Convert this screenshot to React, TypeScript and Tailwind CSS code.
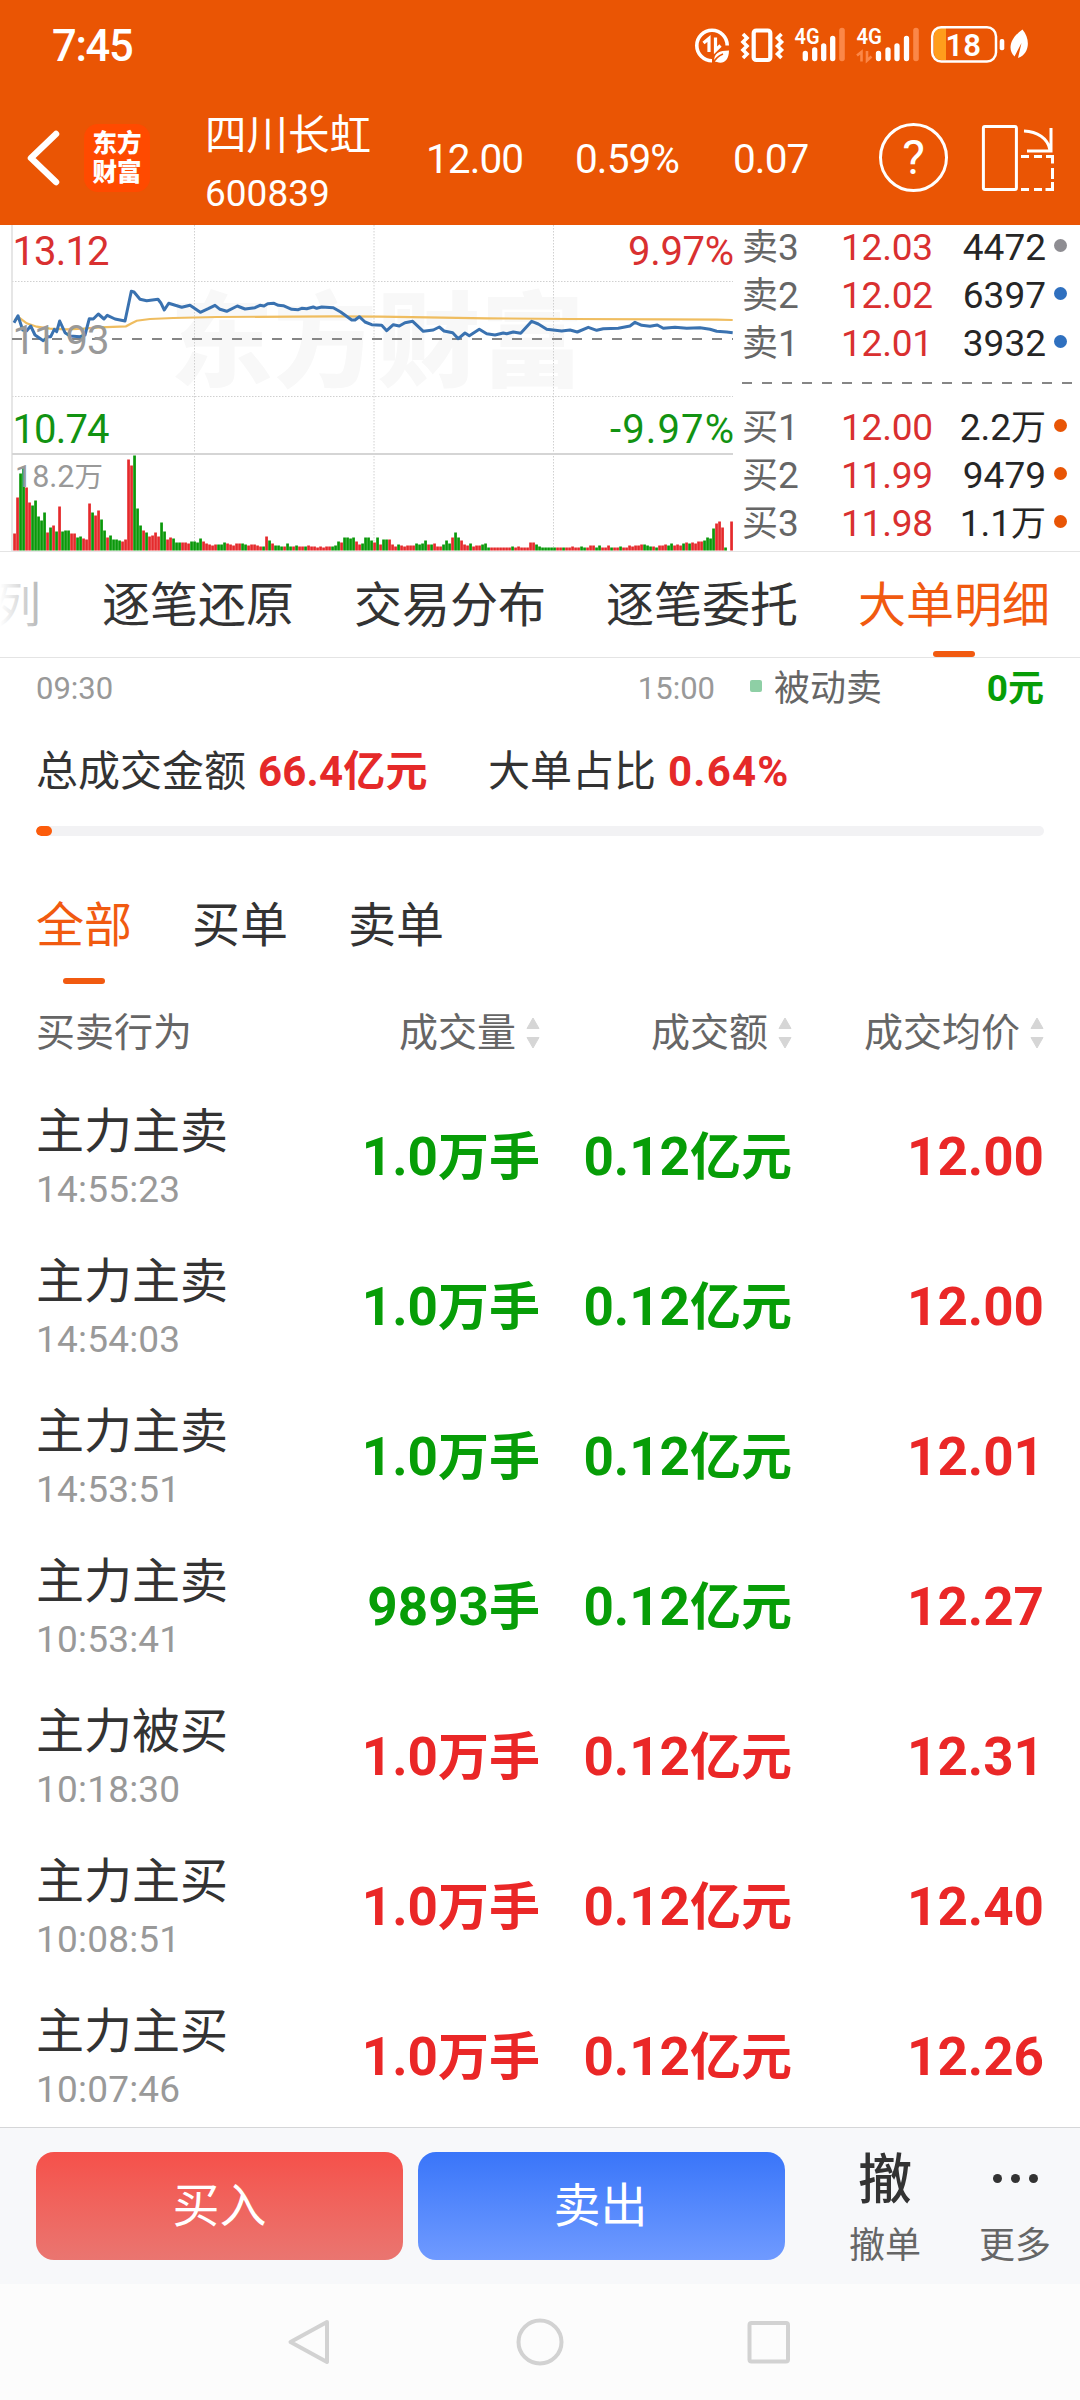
import clsx from 'clsx';
import type { ReactNode } from 'react';

type Side = 'buy' | 'sell';

interface Trade {
  label: string;
  time: string;
  volume: [string, string];
  amount: [string, string];
  price: string;
  side: Side;
}

interface Quote {
  label: string;
  level: string;
  price: string;
  volume: string;
  unit?: string;
  dot: string;
}

const TRADES: Trade[] = [
  { label: '主力主卖', time: '14:55:23', volume: ['1.0', '万手'], amount: ['0.12', '亿元'], price: '12.00', side: 'sell' },
  { label: '主力主卖', time: '14:54:03', volume: ['1.0', '万手'], amount: ['0.12', '亿元'], price: '12.00', side: 'sell' },
  { label: '主力主卖', time: '14:53:51', volume: ['1.0', '万手'], amount: ['0.12', '亿元'], price: '12.01', side: 'sell' },
  { label: '主力主卖', time: '10:53:41', volume: ['9893', '手'], amount: ['0.12', '亿元'], price: '12.27', side: 'sell' },
  { label: '主力被买', time: '10:18:30', volume: ['1.0', '万手'], amount: ['0.12', '亿元'], price: '12.31', side: 'buy' },
  { label: '主力主买', time: '10:08:51', volume: ['1.0', '万手'], amount: ['0.12', '亿元'], price: '12.40', side: 'buy' },
  { label: '主力主买', time: '10:07:46', volume: ['1.0', '万手'], amount: ['0.12', '亿元'], price: '12.26', side: 'buy' },
];

const ASKS: Quote[] = [
  { label: '卖', level: '3', price: '12.03', volume: '4472', dot: 'bg-[#8e8d92]' },
  { label: '卖', level: '2', price: '12.02', volume: '6397', dot: 'bg-[#2f70bf]' },
  { label: '卖', level: '1', price: '12.01', volume: '3932', dot: 'bg-[#2f70bf]' },
];

const BIDS: Quote[] = [
  { label: '买', level: '1', price: '12.00', volume: '2.2', unit: '万', dot: 'bg-[#e85505]' },
  { label: '买', level: '2', price: '11.99', volume: '9479', dot: 'bg-[#e85505]' },
  { label: '买', level: '3', price: '11.98', volume: '1.1', unit: '万', dot: 'bg-[#e85505]' },
];

const TABS = ['逐笔还原', '交易分布', '逐笔委托', '大单明细'];

// One entry per minute: colour of the bar and its height.
const VOLUME =
  'r17 r53 g77 g83 r63 r48 g45 g50 g34 g30 g38 r18 g23 r25 g19 r44 g19 g20 g20 r17 r17 g13 g14 r12 r11 r47 g38 r35 r40 g31 ' +
  'g20 r13 g15 g11 g11 g10 r9 r11 r91 r85 g95 g42 g25 r20 g18 r14 r15 r18 r14 g28 g19 r11 r13 g12 g8 g8 r8 r8 r7 g9 ' +
  'g9 g8 g12 r9 r7 r6 r5 r6 g6 g6 g8 r7 r6 r5 r7 r7 g7 g6 r5 r6 r6 r5 r4 g4 r14 g10 r7 g5 g5 g4 ' +
  'r4 g7 g4 r4 g5 r4 r4 g4 r5 r4 r4 r3 r4 r3 r4 r4 g4 g5 g9 r8 g13 g13 g12 g13 r9 r6 g7 g13 g13 g10 ' +
  'r8 g13 r6 g11 g11 r11 r6 r4 g6 r5 r4 r5 r5 r5 g7 g6 g7 g10 r6 g6 r7 r4 r4 g6 g10 g7 r13 g18 g13 r10 ' +
  'r6 r5 g7 r4 r5 r5 g6 g7 g3 r3 r3 r3 r3 r3 r3 r3 g4 r3 r4 r3 r3 r3 r8 r8 g6 g4 g3 g3 g3 g3 ' +
  'g3 r3 r3 g3 r3 r3 r4 r3 r3 g4 g3 r3 r5 r5 g3 g5 r3 r3 r5 g3 r3 r3 g4 r3 r3 r5 r4 r5 r5 r6 ' +
  'g6 g5 g4 r4 g3 r5 r5 r6 g5 g7 r5 r6 r5 g7 r8 g7 r8 r7 r9 r9 g10 g13 g12 g22 r27 r29 r23 g3 r0 r29';

const PRICE_LINE =
  '14,322.7 18,315.7 22.7,330 26.7,330.7 30.7,326 35,335 43.3,340.7 48.3,336.7 50.7,336.7 54.3,329.3 56.7,331.7 59.7,321 65,332.7 70,336 80,336.7 85,335 89.3,318.7 93.3,319 98.3,314 104,319 107.3,315.3 115,319 125,321 127.7,308.3 131.3,291.3 134,292 140,299.3 146.7,300.7 158,299.3 160.7,302.7 164.3,310 168.7,303.3 181.7,307.3 190,305.3 200.3,312.3 208.3,308.7 215,305.3 220,309.3 226.7,311.3 237.3,306 245,309 255,307.7 260,305.3 264,306 267.7,303.7 274,303.3 278.3,305.3 283.3,305.7 291.7,309.3 298.3,309.7 301.7,308.3 306.7,308.7 313.3,307 316.7,308.3 321.7,307 333.3,307.7 340.7,312 351.7,320 355,320 359.3,316.7 365,322 371.7,324.7 381.7,325.3 386.7,330.7 393.3,324.7 399.3,326 405,322.7 412.7,321.3 423.3,331.3 433.3,330 439.3,327 444,331 452.7,332.7 458.3,338.7 465,333 469.3,335.7 479.3,329.3 486.7,333.7 495,335 503.3,333 506.7,333.7 513.3,332 520.7,333.3 531.7,321.3 538.3,324 546.7,329.3 561.7,331 570,330 577.3,332 588.3,327.3 596.7,330.3 603.3,328.7 618.3,328.3 630,326 635,322.3 641.7,325.3 650,326.3 657.3,325 663.3,328.3 675,327.3 686.7,328.3 700,327.7 710,329.3 716.7,331.3 726.7,332 732.7,332.7';

const AVERAGE_LINE =
  '14,320 20,318.3 26.7,323.3 36.7,326.7 50,328.7 66.7,329.3 83.3,328.7 100,327.3 126,326.3 131.7,323.3 136.7,320.7 150,319 173.3,318 216.7,317 333.3,316.3 380,316.6 427,317.3 487,318.3 570,319 663,319.3 717,319.7 732.7,320';

const SANS = "font-['Roboto','Noto_Sans_CJK_SC',sans-serif]";

const sideColor = (side: Side) => (side === 'buy' ? 'text-[#ea2727]' : 'text-[#079d07]');

function StatusIcons() {
  return (
    <svg width="350" height="50" viewBox="690 20 350 50" className="ml-auto mr-10" fill="none">
      {/* data saver */}
      <path d="M727.200 45.500a15.200 15.200 0 1 0-15.200 15.200" stroke="#fff" strokeWidth="3.600" />
      <path d="M703.500 43l5.500-4.500v13.500" stroke="#fff" strokeWidth="3.200" />
      <path d="M715.500 37.500v13l5-5" stroke="#fff" strokeWidth="3.200" />
      <path d="M714.500 61.500c-1.500-8 5-11 14.500-11 0 10-6 14-12 11.500" fill="#fff" />
      <path d="M713 63.500c2-4.500 5-7.500 10-9.500" stroke="#ea5504" strokeWidth="1.600" />
      {/* vibrate */}
      <rect x="753.700" y="30.500" width="16.600" height="29.500" rx="2.500" stroke="#fff" strokeWidth="4.200" />
      <path d="M743 34l4 4-4 4 4 4-4 4 4 4-4 4M781.500 34l-4 4 4 4-4 4 4 4-4 4 4 4" stroke="#fff" strokeWidth="3.600" />
      {/* signal 1 */}
      <text x="794.500" y="44.300" fill="#fff" fontSize="22.500" fontWeight="600" textLength="25" lengthAdjust="spacingAndGlyphs">4G</text>
      <path d="M805.300 53.500v5M814.700 50v8.500M823.700 46v12.500M832.700 38.500v20" stroke="#fff" strokeWidth="5.300" strokeLinecap="round" />
      <path d="M842 30.500v28" stroke="#fb8748" strokeWidth="5.600" strokeLinecap="round" />
      {/* signal 2 */}
      <text x="856.500" y="44.300" fill="#fff" fontSize="22.500" fontWeight="600" textLength="25.500" lengthAdjust="spacingAndGlyphs">4G</text>
      <path d="M857 55.500l4.500-3.500v9.500M867 51v9.500l4.500-4" stroke="#fb8748" strokeWidth="2.600" />
      <path d="M878.500 53.500v5M888 50v8.500M897 46v12.500M906.500 38.500v20" stroke="#fff" strokeWidth="5.300" strokeLinecap="round" />
      <path d="M916 30.500v28" stroke="#fb8748" strokeWidth="5.600" strokeLinecap="round" />
      {/* battery */}
      <path d="M946 28h-5a7 7 0 0 0-7 7v18a7 7 0 0 0 7 7h5z" fill="#ff9d1c" />
      <rect x="932.200" y="27.200" width="63.800" height="34.300" rx="9" stroke="#fff" strokeWidth="2.500" />
      <text x="945.500" y="55.500" fill="#fff" fontSize="31" fontWeight="600">18</text>
      <rect x="999.700" y="39" width="4.600" height="11.300" rx="2" fill="#fff" />
      <path d="M1022.500 29.500c8 9 7.500 24.500-4.500 28.500l3.500-15-7 13.500c-7-6.500-5-18 8-27z" fill="#fff" />
    </svg>
  );
}

function RotateIcon() {
  return (
    <svg width="76" height="70" viewBox="981 122 76 70" className="ml-[33px]" fill="none" stroke="#fff" strokeWidth="3">
      <rect x="983.400" y="125.500" width="33" height="63" rx="1.500" />
      <path d="M1024 130c13 .500 24 7 26 19M1051 127v23h-24" />
      <path d="M1021 155.500h8M1034 155.500h8M1046 155.500h6.500v7M1052.500 167v11M1052.500 181v7.500h-7M1042 188.500h-8M1029 188.500h-8" />
    </svg>
  );
}

function Header() {
  return (
    <header className="h-[225px] bg-[#ea5504] text-white">
      <div className="flex h-[90px] items-center">
        <span className="ml-[52px] pt-[4px] text-[43.500px] font-medium leading-[60px] tracking-[-1.300px]">7:45</span>
        <StatusIcons />
      </div>
      <div className="flex h-[135px] items-center">
        <svg width="38" height="60" viewBox="0 0 38 60" className="ml-[24px]" fill="none">
          <path d="M32 6L7 30l25 24" stroke="#fff" strokeWidth="6.500" strokeLinecap="round" strokeLinejoin="round" />
        </svg>
        <div className="ml-[22px] flex h-[68px] w-[66px] flex-col items-center justify-center rounded-[14px] bg-[#ff4a00] text-[24.500px] font-black leading-[29px]">
          <span>东方</span>
          <span>财富</span>
        </div>
        <div className="ml-[55px] w-[221px] self-start pt-[18px]">
          <div className="text-[41.500px] leading-[56px]">四川长虹</div>
          <div className="text-[37px] leading-[59px]">600839</div>
        </div>
        <span className="w-[149px] pt-[3px] text-[40.500px] tracking-[-0.900px]">12.00</span>
        <span className="w-[158px] pt-[3px] text-[40.500px] tracking-[-0.900px]">0.59%</span>
        <span className="w-[146px] pt-[3px] text-[40.500px] tracking-[-0.900px]">0.07</span>
        <div className="flex h-[69px] w-[69px] items-center justify-center rounded-full border-[3px] border-white text-[48px]">
          ?
        </div>
        <RotateIcon />
      </div>
    </header>
  );
}

function MinuteChart() {
  return (
    <svg width="734" height="326" viewBox="0 225 734 326" fontSize="40">
      <text x="170" y="379" fontSize="103" fontWeight="900" fill="#f8f8f8" textLength="414">东方财富</text>
      <path
        d="M194.500 225V551M374 225V551M553.500 225V551M12 281.500H733M12 396.500H733"
        stroke="#d0d0d0"
        strokeDasharray="1.500 1.500"
      />
      <path d="M12 225V551" stroke="#dedede" strokeWidth="1.500" />
      <path d="M12 454H733" stroke="#d5d5d5" strokeWidth="2" />
      <path d="M12 339H733" stroke="#868686" strokeWidth="2" strokeDasharray="10 10" />
      <polyline points={AVERAGE_LINE} fill="none" stroke="#efbd60" strokeWidth="2.200" />
      <polyline points={PRICE_LINE} fill="none" stroke="#3a72b0" strokeWidth="3" strokeLinejoin="round" />
      {VOLUME.split(' ').map((bar, i) => {
        const height = Number(bar.slice(1));
        return (
          <rect
            key={i}
            x={13.2 + i * 3}
            y={550.5 - height}
            width="2.700"
            height={height}
            fill={bar[0] === 'r' ? '#e52a2c' : '#0a980a'}
          />
        );
      })}
      <text x="12.500" y="265" fill="#d93030" textLength="97">13.12</text>
      <text x="12.500" y="354" fill="#999" textLength="97">11.93</text>
      <text x="12.500" y="443" fill="#129312" textLength="97">10.74</text>
      <text x="15" y="487" fill="#999" fontSize="30.500">
        18.2<tspan fontSize="28.500">万</tspan>
      </text>
      <text x="734" y="265" fill="#d93030" textAnchor="end" textLength="106">9.97%</text>
      <text x="734" y="443" fill="#129312" textAnchor="end" textLength="124">-9.97%</text>
    </svg>
  );
}

function QuoteRow({ quote }: { quote: Quote }) {
  return (
    <div className="flex h-[48px] items-center text-[37px] leading-[48px]">
      <span className="w-[99px] text-[#666]">
        <span className="text-[36px]">{quote.label}</span>
        {quote.level}
      </span>
      <span className="tracking-[-0.200px] text-[#d93030]">{quote.price}</span>
      <span className="ml-auto text-[#262626]">
        {quote.volume}
        {quote.unit && <span className="text-[35px]">{quote.unit}</span>}
      </span>
      <span className={clsx('mb-[6px] ml-[8px] mr-[13px] h-[13px] w-[13px] rounded-full', quote.dot)} />
    </div>
  );
}

function OrderBook() {
  return (
    <div className="-mt-px flex-1 pl-[8px]">
      {ASKS.map((q) => (
        <QuoteRow key={q.level} quote={q} />
      ))}
      <svg width="338" height="2" className="mb-[20px] mt-[14px] block">
        <path d="M0 1H338" stroke="#868686" strokeWidth="2" strokeDasharray="10 10" />
      </svg>
      {BIDS.map((q) => (
        <QuoteRow key={q.level} quote={q} />
      ))}
    </div>
  );
}

function TabBar() {
  return (
    <nav className="relative flex h-[107px] gap-[60px] overflow-hidden border-y border-[#e4e4e4] text-[48px] leading-[108px] text-[#333]">
      <span className="-ml-[7px] mr-px w-[48px] shrink-0">列</span>
      {TABS.map((tab, i) => {
        const active = i === TABS.length - 1;
        return (
          <span key={tab} className={clsx('relative w-[192px] shrink-0', active && 'text-[#f15a10]')}>
            {tab}
            {active && <span className="absolute bottom-0 left-[75px] h-[6px] w-[42px] rounded-full bg-[#f15a10]" />}
          </span>
        );
      })}
      <div className="absolute inset-y-0 left-0 w-[112px] bg-linear-to-r from-white to-white/0" />
    </nav>
  );
}

function Summary() {
  return (
    <section className="px-[36px]">
      <div className="flex h-[62px] items-center text-[31px] text-[#999]">
        <span className="pt-px">09:30</span>
        <span className="ml-auto pt-px">15:00</span>
        <span className="mb-[6px] ml-[35px] h-[12px] w-[12px] rounded-[2px] bg-[#8ecfa5]" />
        <span className="ml-[12px] w-[207px] text-[36px] text-[#666]">被动卖</span>
        <span className="w-[63px] text-right text-[36px] font-bold text-[#079d07]">
          <span className="text-[37px]">0</span>元
        </span>
      </div>
      <div className="flex h-[102px] items-center text-[42px] text-[#333]">
        <span>总成交金额</span>
        <span className="ml-[12px] font-bold tracking-[0.200px] text-[#e52929]">66.4亿元</span>
        <span className="ml-auto">大单占比</span>
        <span className="ml-[12px] w-[376px] font-bold tracking-[1.200px] text-[#e52929]">0.64%</span>
      </div>
      <div className="mt-[4px] h-[10px] overflow-hidden rounded-full bg-[#f2f2f4]">
        <div className="h-full w-[16px] rounded-full bg-[#fc5c0c]" />
      </div>
    </section>
  );
}

function SortHeader({ children }: { children: ReactNode }) {
  return (
    <span className="flex items-center justify-end gap-[10px]">
      {children}
      <svg width="14" height="32" viewBox="0 0 14 32" fill="#d6d6d6" stroke="#d6d6d6" strokeWidth="1" strokeLinejoin="round">
        <path d="M7 1l6 10.500H1zM7 31l6-10.500H1z" />
      </svg>
    </span>
  );
}

function Amount({ value, side }: { value: [string, string]; side: Side }) {
  const [digits, unit] = value;
  return (
    <span className={clsx('whitespace-nowrap pt-[4px] text-[51px]', sideColor(side))}>
      <span className="text-[53px]">{digits}</span>
      {unit}
    </span>
  );
}

function TradeRow({ trade }: { trade: Trade }) {
  return (
    <div className="grid h-[150px] grid-cols-[288px_216px_252px_252px] items-center text-right font-bold">
      <div className="self-start pt-[21px] text-left font-normal">
        <div className="text-[48px] leading-[60px] text-[#333]">{trade.label}</div>
        <div className="pt-px text-[37px] leading-[54px] tracking-[0.200px] text-[#999]">{trade.time}</div>
      </div>
      <Amount value={trade.volume} side={trade.side} />
      <Amount value={trade.amount} side={trade.side} />
      <span className="pt-[4px] text-[53px] text-[#ea2727]">{trade.price}</span>
    </div>
  );
}

function TradeList() {
  return (
    <section className="h-[1291px] overflow-hidden px-[36px]">
      <div className="flex h-[154px] gap-[60px] pt-[60px] text-[48px] leading-[60px] text-[#333]">
        <div className="flex flex-col items-center text-[#f15a10]">
          全部
          <span className="mt-[22px] h-[6px] w-[42px] rounded-full bg-[#f15a10]" />
        </div>
        <span>买单</span>
        <span>卖单</span>
      </div>
      <div className="mb-[5px] grid h-[86px] grid-cols-[288px_216px_252px_252px] items-center text-[39px] text-[#666]">
        <span>买卖行为</span>
        <SortHeader>成交量</SortHeader>
        <SortHeader>成交额</SortHeader>
        <SortHeader>成交均价</SortHeader>
      </div>
      {TRADES.map((t) => (
        <TradeRow key={t.time} trade={t} />
      ))}
    </section>
  );
}

function ActionBar() {
  return (
    <div className="flex h-[157px] border-t-[1.500px] border-[#d5d6d8] bg-[#f7f8fa] pl-[36px] pt-[24px]">
      <button className="h-[108px] w-[367px] rounded-[18px] bg-linear-to-b from-[#f5504a] to-[#ea7570] text-[47px] text-white">
        买入
      </button>
      <button className="ml-[15px] h-[108px] w-[367px] rounded-[18px] bg-linear-to-b from-[#3975f9] to-[#6f9aff] pr-[2px] text-[47px] text-white">
        卖出
      </button>
      <div className="ml-[58px] flex w-[84px] flex-col items-center text-[36px] leading-[52px] text-[#666]">
        <span className="h-[68px] text-[54px] font-medium leading-[58px] text-[#333]">撤</span>
        撤单
      </div>
      <div className="ml-[46px] flex w-[84px] flex-col items-center text-[36px] leading-[52px] text-[#666]">
        <span className="flex h-[68px] gap-[9px] pt-[22px]">
          <i className="h-[9px] w-[9px] rounded-full bg-[#333]" />
          <i className="h-[9px] w-[9px] rounded-full bg-[#333]" />
          <i className="h-[9px] w-[9px] rounded-full bg-[#333]" />
        </span>
        更多
      </div>
    </div>
  );
}

function SystemNav() {
  return (
    <div className="flex h-[116px] items-center justify-center gap-[182px] bg-[#fcfcfc]">
      <svg width="48" height="48" viewBox="0 0 48 48" fill="none" stroke="#d2d2d2" strokeWidth="4" strokeLinejoin="round">
        <path d="M41 4L4.500 24 41 44z" />
      </svg>
      <svg width="48" height="48" viewBox="0 0 48 48" fill="none" stroke="#d2d2d2" strokeWidth="4">
        <circle cx="24" cy="24" r="21.500" />
      </svg>
      <svg width="48" height="48" viewBox="0 0 48 48" fill="none" stroke="#d2d2d2" strokeWidth="4">
        <rect x="3.500" y="5" width="38.500" height="38.500" rx="2" />
      </svg>
    </div>
  );
}

export default function App() {
  return (
    <div className={clsx('h-[2400px] w-[1080px] overflow-hidden bg-white', SANS)}>
      <Header />
      <div className="flex h-[326px]">
        <MinuteChart />
        <OrderBook />
      </div>
      <TabBar />
      <Summary />
      <TradeList />
      <ActionBar />
      <SystemNav />
    </div>
  );
}
